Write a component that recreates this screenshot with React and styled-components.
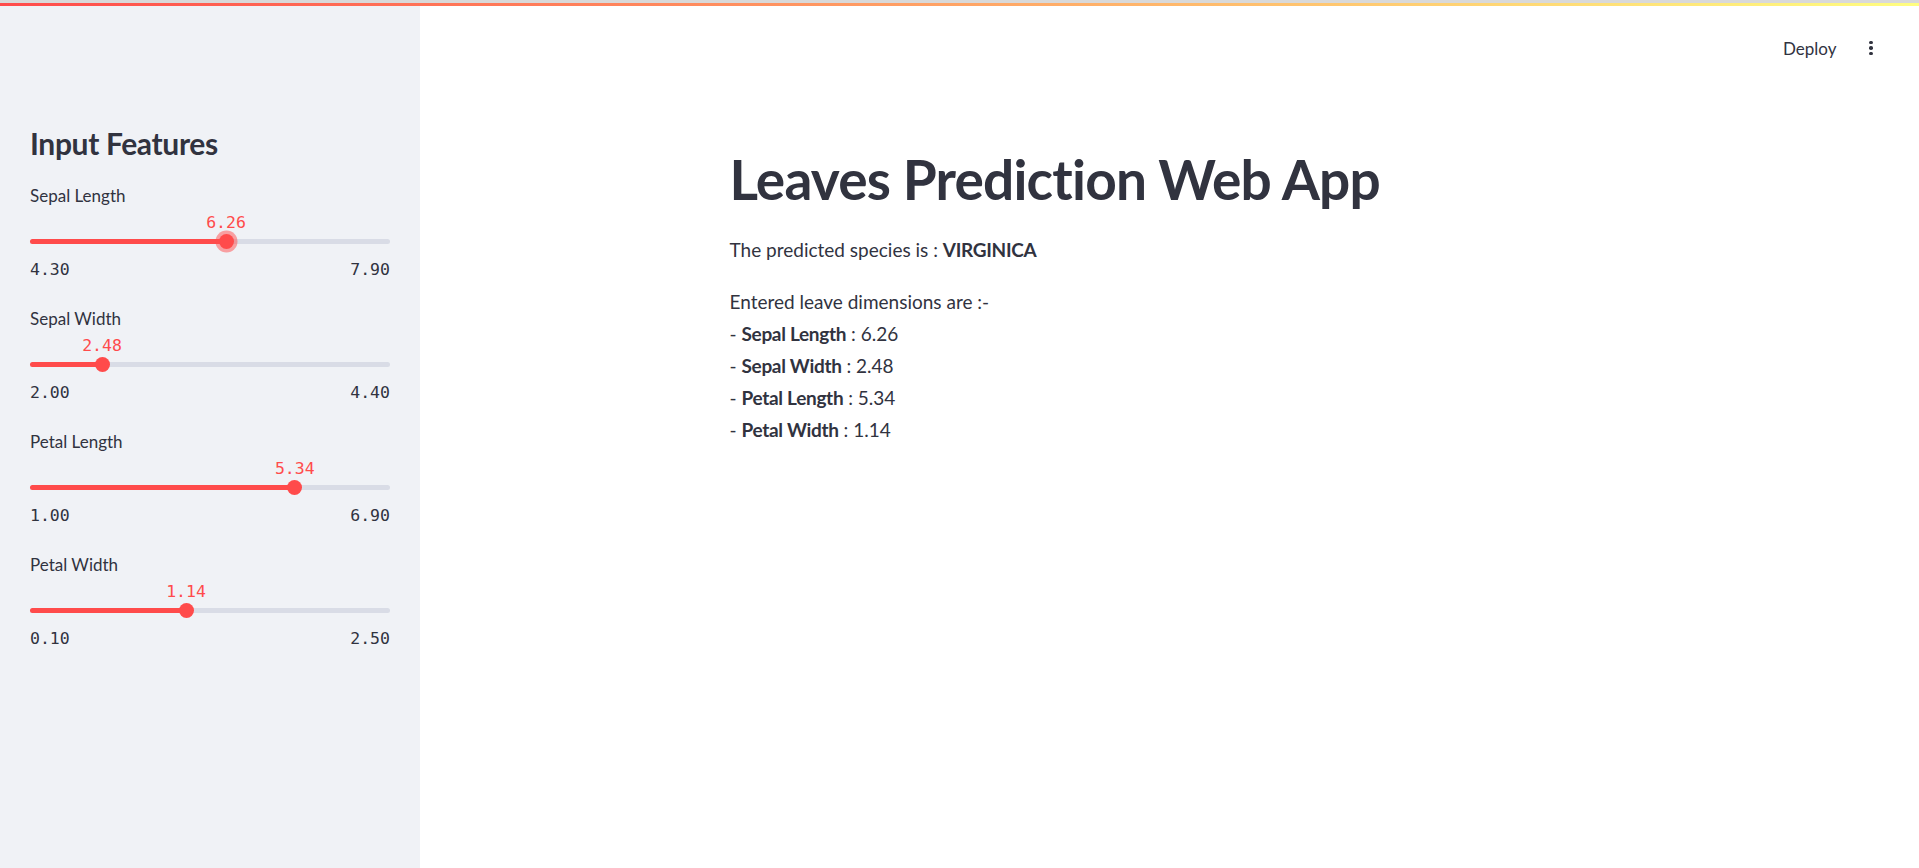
import React from "react";
import styled, { createGlobalStyle } from "styled-components";

const GlobalStyle = createGlobalStyle`
  html, body {
    margin: 0;
    padding: 0;
    background: #ffffff;
  }
  body {
    font-family: Lato, "Noto Sans", sans-serif;
    color: #31333f;
  }
  * {
    box-sizing: border-box;
  }
`;

const SLIDERS = [
  { label: "Sepal Length", min: 4.3, max: 7.9, value: 6.26, focused: true },
  { label: "Sepal Width", min: 2.0, max: 4.4, value: 2.48 },
  { label: "Petal Length", min: 1.0, max: 6.9, value: 5.34 },
  { label: "Petal Width", min: 0.1, max: 2.5, value: 1.14 },
];

const Page = styled.div`
  display: flex;
  flex-direction: column;
  height: 868px;
  overflow: hidden;
`;

const TopStrip = styled.div`
  height: 3px;
  background: #d9d9d9;
`;

const Decoration = styled.div`
  height: 3px;
  background: linear-gradient(90deg, #ff4b4b, #fffd80);
`;

const Body = styled.div`
  flex: 1;
  display: flex;
`;

const Sidebar = styled.aside`
  width: 420px;
  flex-shrink: 0;
  background: #f0f2f6;
  padding: 119px 30px 0 30px;
  display: flex;
  flex-direction: column;
`;

const SideTitle = styled.h2`
  margin: 0 0 23px 0;
  font-size: 30px;
  font-weight: 700;
  line-height: 36px;
  letter-spacing: -0.35px;
`;

const SliderBlock = styled.div`
  display: flex;
  flex-direction: column;
  margin-bottom: 25px;
`;

const SliderLabel = styled.div`
  font-size: 17px;
  line-height: 24px;
  height: 24px;
`;

const TrackArea = styled.div`
  position: relative;
  height: 50px;
`;

const Track = styled.div`
  position: absolute;
  left: 0;
  right: 0;
  top: 31px;
  height: 5px;
  border-radius: 3px;
  background: #d9dce6;
`;

const Fill = styled.div`
  height: 100%;
  border-radius: 3px;
  background: #ff4b4b;
`;

const Thumb = styled.div`
  position: absolute;
  top: 26px;
  width: 15px;
  height: 15px;
  margin-left: -7.5px;
  border-radius: 50%;
  background: #ff4b4b;
  box-shadow: ${(p) => (p.focused ? "0 0 0 3.5px rgba(255, 75, 75, 0.5)" : "none")};
`;

const ValueTag = styled.div`
  position: absolute;
  top: 5px;
  transform: translateX(-50%);
  font-family: "DejaVu Sans Mono", "Liberation Mono", monospace;
  font-size: 16.5px;
  line-height: 20px;
  color: #ff4b4b;
  white-space: nowrap;
`;

const Ticks = styled.div`
  display: flex;
  justify-content: space-between;
  font-family: "DejaVu Sans Mono", "Liberation Mono", monospace;
  font-size: 16.5px;
  line-height: 24px;
  color: #31333f;
`;

const Main = styled.main`
  flex: 1;
  display: flex;
  flex-direction: column;
`;

const Header = styled.header`
  height: 84px;
  display: flex;
  align-items: center;
  justify-content: flex-end;
  padding-right: 46px;
  gap: 33px;
`;

const DeployButton = styled.button`
  border: none;
  background: none;
  padding: 0;
  font-family: Lato, "Noto Sans", sans-serif;
  font-size: 17px;
  color: #31333f;
  cursor: pointer;
`;

const MenuDots = styled.div`
  display: flex;
  flex-direction: column;
  gap: 2px;
  span {
    width: 3.6px;
    height: 3.6px;
    border-radius: 50%;
    background: #31333f;
  }
`;

const Column = styled.div`
  width: 920px;
  max-width: 100%;
  margin: 0 auto;
  padding: 0 20px;
`;

const Title = styled.h1`
  margin: 56px 0 22px 0;
  font-size: 55px;
  font-weight: 700;
  line-height: 66px;
  letter-spacing: -0.8px;
`;

const Para = styled.p`
  margin: 0 0 20px 0;
  font-size: 19px;
  line-height: 32px;
  strong {
    font-weight: 700;
    letter-spacing: -0.3px;
  }
`;

function Slider({ label, min, max, value, focused }) {
  const pct = ((value - min) / (max - min)) * 100;
  return (
    <SliderBlock>
      <SliderLabel>{label}</SliderLabel>
      <TrackArea>
        <Track>
          <Fill style={{ width: `${pct}%` }} />
        </Track>
        <ValueTag style={{ left: `${pct}%` }}>{value.toFixed(2)}</ValueTag>
        <Thumb focused={focused} style={{ left: `${pct}%` }} />
      </TrackArea>
      <Ticks>
        <span>{min.toFixed(2)}</span>
        <span>{max.toFixed(2)}</span>
      </Ticks>
    </SliderBlock>
  );
}

export default function App() {
  return (
    <Page>
      <GlobalStyle />
      <TopStrip />
      <Decoration />
      <Body>
        <Sidebar>
          <SideTitle>Input Features</SideTitle>
          {SLIDERS.map((s) => (
            <Slider key={s.label} {...s} />
          ))}
        </Sidebar>
        <Main>
          <Header>
            <DeployButton>Deploy</DeployButton>
            <MenuDots>
              <span />
              <span />
              <span />
            </MenuDots>
          </Header>
          <Column>
            <Title>Leaves Prediction Web App</Title>
            <Para>
              The predicted species is : <strong>VIRGINICA</strong>
            </Para>
            <Para>
              Entered leave dimensions are :-
              <br />- <strong>Sepal Length</strong> : 6.26
              <br />- <strong>Sepal Width</strong> : 2.48
              <br />- <strong>Petal Length</strong> : 5.34
              <br />- <strong>Petal Width</strong> : 1.14
            </Para>
          </Column>
        </Main>
      </Body>
    </Page>
  );
}
